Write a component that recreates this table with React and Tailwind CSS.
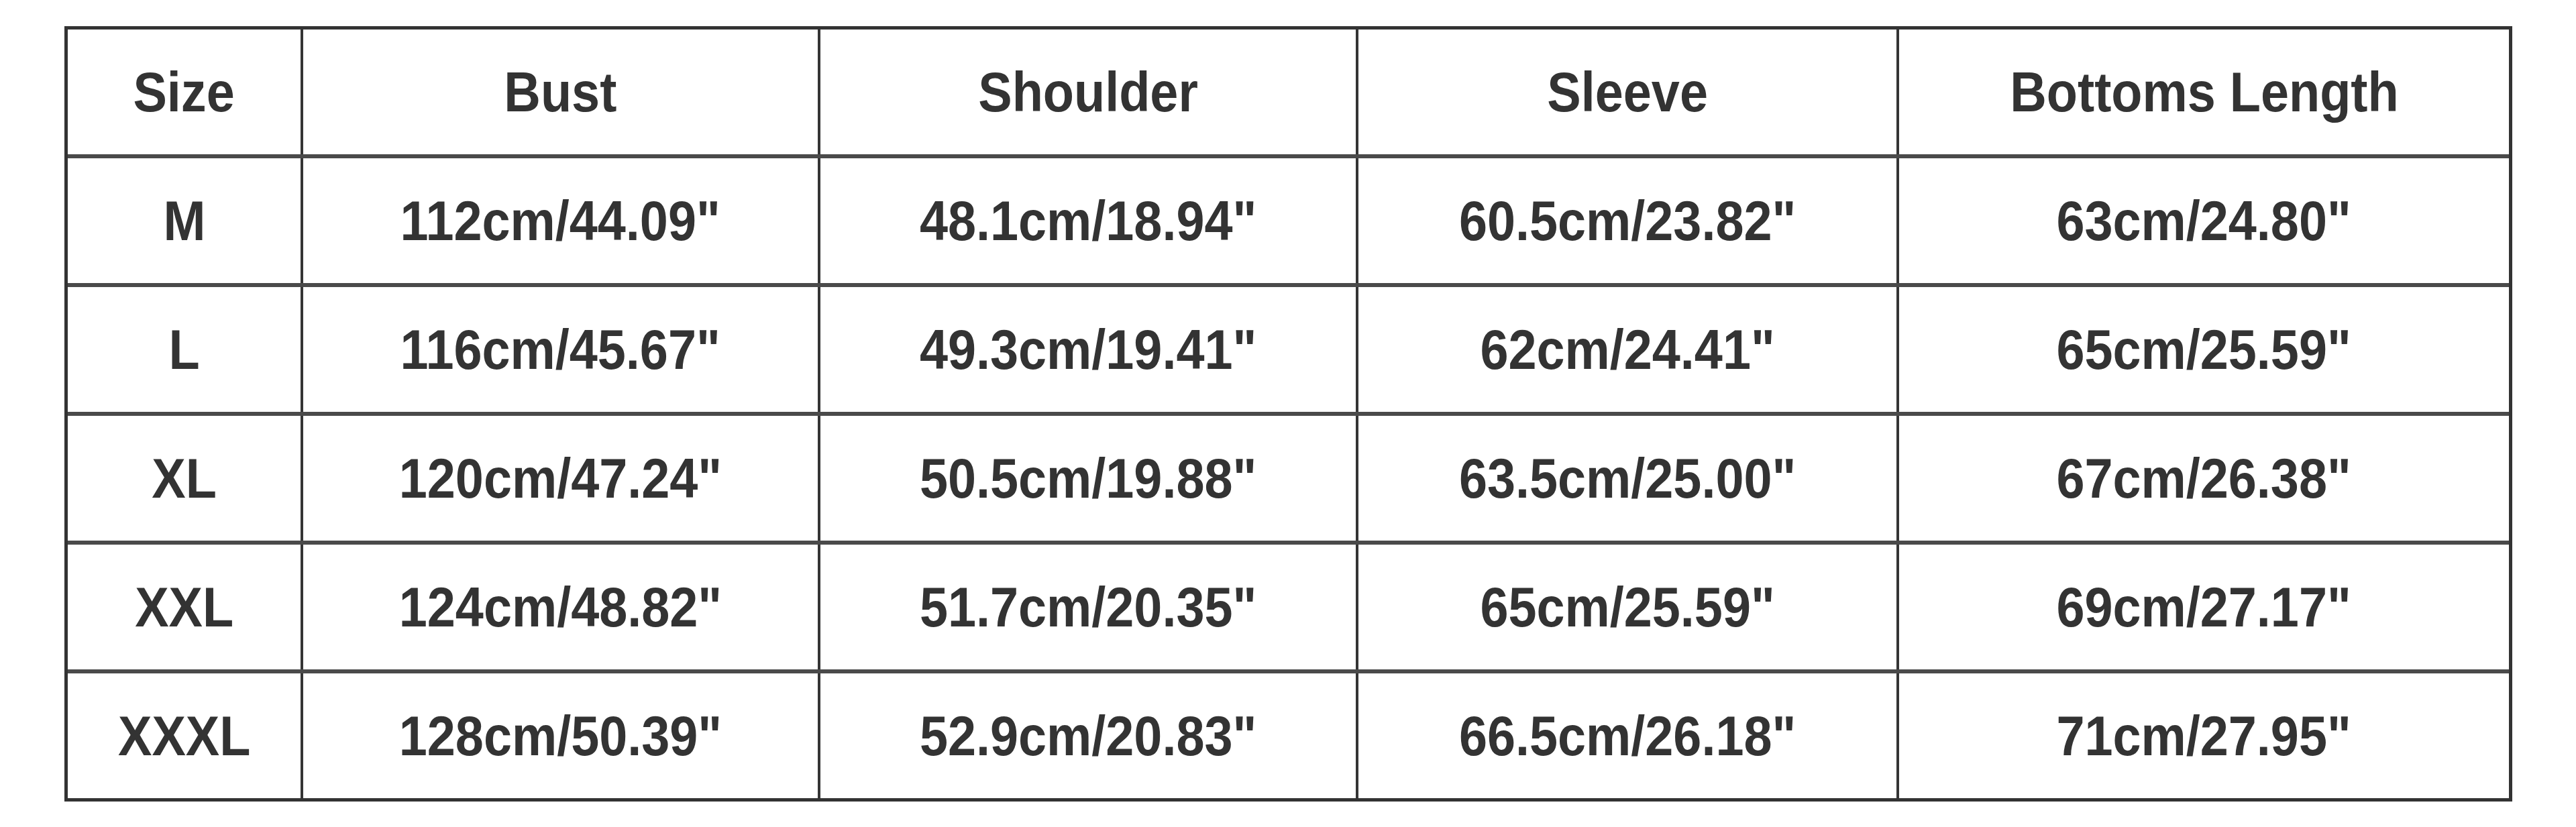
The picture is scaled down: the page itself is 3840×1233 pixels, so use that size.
export default function App() {
  const columns = [
    { label: "Size", width: "w-[347px]" },
    { label: "Bust", width: "w-[771px]" },
    { label: "Shoulder", width: "w-[802px]" },
    { label: "Sleeve", width: "w-[806px]" },
    { label: "Bottoms Length", width: "w-[913px]" },
  ];

  const rows = [
    ["M", "112cm/44.09\"", "48.1cm/18.94\"", "60.5cm/23.82\"", "63cm/24.80\""],
    ["L", "116cm/45.67\"", "49.3cm/19.41\"", "62cm/24.41\"", "65cm/25.59\""],
    ["XL", "120cm/47.24\"", "50.5cm/19.88\"", "63.5cm/25.00\"", "67cm/26.38\""],
    ["XXL", "124cm/48.82\"", "51.7cm/20.35\"", "65cm/25.59\"", "69cm/27.17\""],
    ["XXXL", "128cm/50.39\"", "52.9cm/20.83\"", "66.5cm/26.18\"", "71cm/27.95\""],
  ];

  const allRows = [columns.map((c) => c.label), ...rows];

  return (
    <div
      className="min-h-screen bg-white pt-[39px] pl-[96px]"
      style={{ fontFamily: '"Liberation Sans", Arial, sans-serif' }}
    >
      {/* size chart */}
      <div className="w-max border-[5px] border-[#333333]">
        {allRows.map((row, rowIndex) => (
          <div
            key={rowIndex}
            className={
              rowIndex === 0
                ? "flex h-[186px]"
                : "flex h-[192px] border-t-[6px] border-[#4a4a4a]"
            }
          >
            {row.map((cell, cellIndex) => (
              <div
                key={cellIndex}
                className={
                  columns[cellIndex].width +
                  (cellIndex === 0
                    ? " flex items-center justify-center"
                    : " flex items-center justify-center border-l-4 border-[#353535]")
                }
              >
                <span className="inline-block scale-x-90 text-[84px] font-bold leading-none text-[#333333] whitespace-nowrap">
                  {cell}
                </span>
              </div>
            ))}
          </div>
        ))}
      </div>
    </div>
  );
}
